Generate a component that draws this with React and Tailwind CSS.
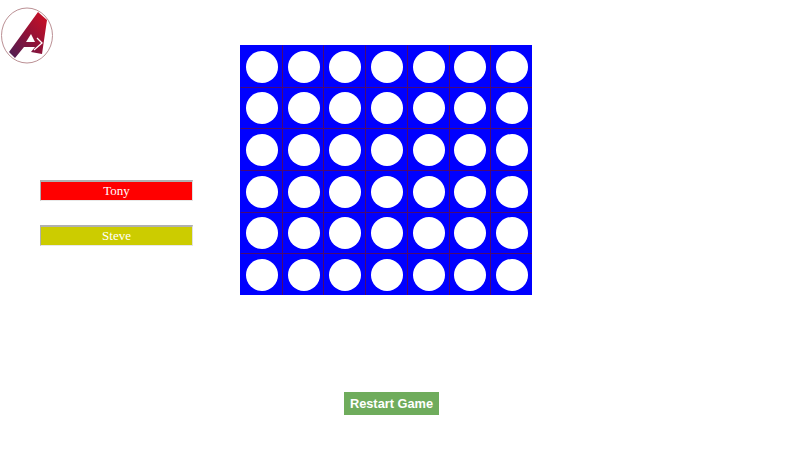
const cells = Array.from({ length: 42 }, (_, i) => i);

function Logo() {
  return (
    <svg width="56" height="66" viewBox="0 0 56 66" className="block">
      <defs>
        <linearGradient id="logoRed" x1="0" y1="1" x2="1" y2="0">
          <stop offset="0" stopColor="#4a1f55" />
          <stop offset="0.5" stopColor="#8f1238" />
          <stop offset="1" stopColor="#d00f22" />
        </linearGradient>
      </defs>
      <ellipse cx="27" cy="35.5" rx="25.5" ry="27.5" fill="none" stroke="#bb9094" strokeWidth="1" />
      <path
        d="M9 52 L38 12 L47 20 L42 54 L31 52 L35 47 L24 47 L15 58 Z M31 34 L26 42 L35 42 Z"
        fill="url(#logoRed)"
        fillRule="evenodd"
      />
      <path d="M37 38 L42 43 L34 50" fill="none" stroke="#fff" strokeWidth="1.3" />
    </svg>
  );
}

function Player({ name, color }) {
  return (
    <div className={`h-[21px] w-[153px] border border-t-2 border-t-[#b0b0b0] border-l-[#b0b0b0] border-r-[#e0e0e0] border-b-[#e8e8e8] text-center text-[13px] leading-[18px] text-white font-['Liberation_Serif',serif] ${color}`}>
      {name}
    </div>
  );
}

export default function App() {
  return (
    <div className="flex h-[450px] w-[800px] overflow-hidden bg-white">
      <div className="w-[240px] shrink-0">
        <Logo />
        <div className="ml-10 mt-[114px] flex flex-col gap-6">
          <Player name="Tony" color="bg-[#ff0000]" />
          <Player name="Steve" color="bg-[#cccc00]" />
        </div>
      </div>
      <div className="flex w-[292px] flex-col pt-[45px]">
        <div className="grid h-[250px] w-[292px] grid-cols-7 grid-rows-6 bg-[#0000ff]">
          {cells.map((c) => (
            <div
              key={c}
              className={`flex items-center justify-center border-t border-l border-[#4a0a70] pt-px pl-px ${c % 7 === 0 ? "border-l-transparent" : ""} ${c < 7 ? "border-t-transparent" : ""}`}
            >
              <div className="h-[32px] w-[32px] rounded-full bg-white" />
            </div>
          ))}
        </div>
        <button className="ml-[104px] mt-[97px] h-[23px] w-[95px] bg-[#6fac5c] text-[12.8px] font-bold text-white font-['Liberation_Sans',sans-serif]">
          Restart Game
        </button>
      </div>
    </div>
  );
}
